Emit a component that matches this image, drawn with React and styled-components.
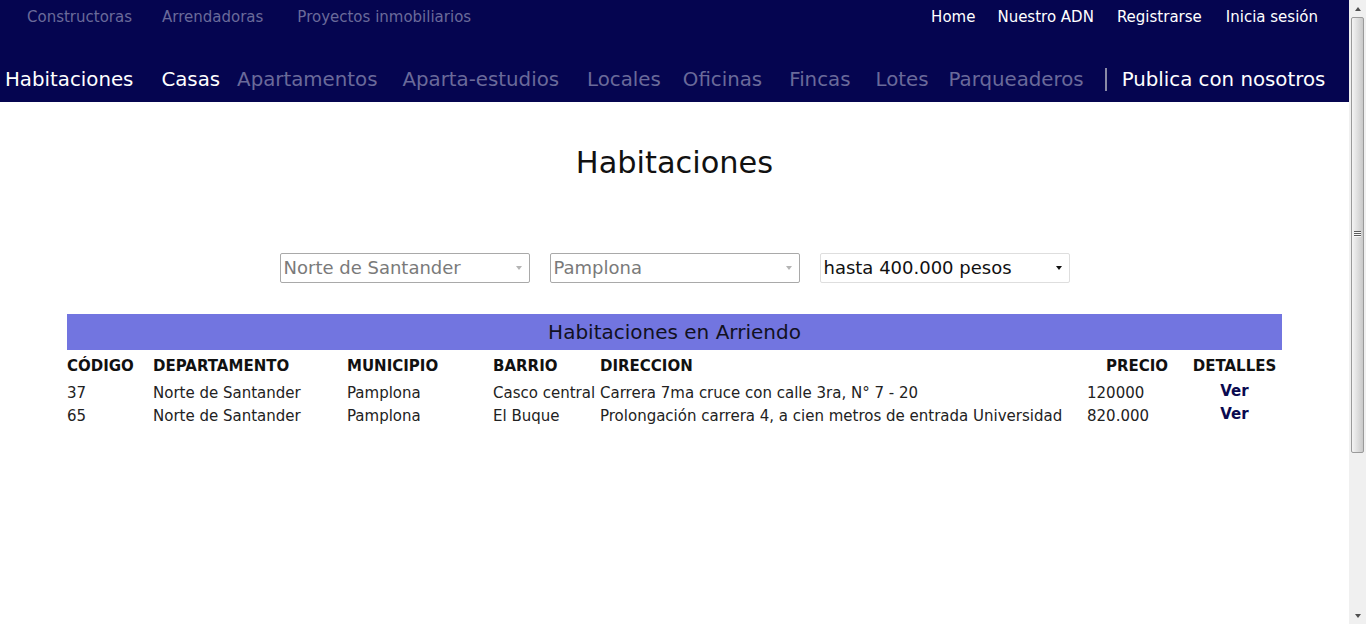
import React from "react";
import styled, { createGlobalStyle } from "styled-components";

const GlobalStyle = createGlobalStyle`
  html, body {
    margin: 0;
    padding: 0;
    background: #ffffff;
    font-family: "DejaVu Sans", "Open Sans", sans-serif;
    overflow: hidden;
  }
`;

const Shell = styled.div`
  display: flex;
  height: 624px;
`;

const Page = styled.div`
  flex: 1;
  min-width: 0;
`;

// fake browser scrollbar seen on the right edge of the screenshot
const ScrollTrack = styled.div`
  width: 17px;
  background: #f0f0f0;
  display: flex;
  flex-direction: column;
  align-items: center;
`;

const ScrollArrow = styled.div`
  height: 17px;
  width: 17px;
  display: flex;
  align-items: center;
  justify-content: center;
  &::before {
    content: "";
    border-left: 3.5px solid transparent;
    border-right: 3.5px solid transparent;
    ${(p) => (p.down ? "border-top" : "border-bottom")}: 4px solid #505050;
  }
`;

const ScrollThumb = styled.div`
  width: 13px;
  height: 436px;
  box-sizing: border-box;
  border: 1px solid #9a9a9a;
  border-radius: 2px;
  background: linear-gradient(to right, #f4f4f4, #dadada 60%, #c9c9c9);
  display: flex;
  flex-direction: column;
  align-items: center;
  justify-content: center;
  gap: 1px;
  padding-bottom: 4px;
`;

const Grip = styled.span`
  width: 7px;
  height: 1px;
  background: #5a5a5a;
  box-shadow: 0 1px 0 #f8f8f8;
`;

const ScrollRest = styled.div`
  flex: 1;
`;

const Header = styled.header`
  background: #050550;
  height: 102px;
  display: flex;
  flex-direction: column;
`;

const TopBar = styled.div`
  display: flex;
  justify-content: space-between;
  align-items: center;
  height: 34px;
  padding: 0 31px 0 27px;
`;

const LinkGroup = styled.div`
  display: flex;
`;

const TopLink = styled.a`
  font-size: 15px;
  color: ${(p) => (p.light ? "#ffffff" : "#6a6a9a")};
  text-decoration: none;
  white-space: nowrap;
  margin-right: ${(p) => p.gap || 0}px;
`;

const MainNav = styled.nav`
  display: flex;
  align-items: center;
  height: 36px;
  margin-top: 27px;
  padding-left: 5px;
`;

const NavLink = styled.a`
  font-size: 19.8px;
  color: ${(p) => (p.active ? "#ffffff" : "#6a6a9a")};
  text-decoration: none;
  margin-right: ${(p) => p.gap}px;
  white-space: nowrap;
`;

const Divider = styled.span`
  width: 2px;
  height: 23px;
  background: #8a8aa6;
  margin-right: 15px;
`;

const Title = styled.h1`
  margin: 43px 0 0;
  text-align: center;
  font-weight: 400;
  font-size: 30.4px;
  color: #111111;
`;

const Filters = styled.div`
  display: flex;
  justify-content: center;
  gap: 20px;
  margin-top: 73px;
`;

const SelectBox = styled.div`
  position: relative;
  width: 250px;
  height: 30px;
  &::after {
    content: "";
    position: absolute;
    right: 8px;
    top: 13px;
    border-left: 3.5px solid transparent;
    border-right: 3.5px solid transparent;
    border-top: 4px solid ${(p) => (p.disabled ? "#b4b4b4" : "#111111")};
    pointer-events: none;
  }
`;

const Select = styled.select`
  appearance: none;
  width: 100%;
  height: 100%;
  box-sizing: border-box;
  font-family: "DejaVu Sans", sans-serif;
  font-size: 18px;
  padding: 0 20px 2px 3px;
  border: 1px solid ${(p) => (p.disabled ? "#a9a9a9" : "#dedede")};
  border-radius: 2px;
  background: #ffffff;
  color: ${(p) => (p.disabled ? "#7a7a7a" : "#111111")};
  opacity: 1;
  outline: none;
`;

const TableWrap = styled.div`
  margin: 31px 67px 0 67px;
  width: 1215px;
`;

const Band = styled.div`
  background: #7275e0;
  height: 36px;
  display: flex;
  align-items: center;
  justify-content: center;
  font-size: 20px;
  color: #111122;
`;

const Table = styled.table`
  width: 100%;
  border-collapse: collapse;
  table-layout: fixed;
`;

const Th = styled.th`
  font-size: 15px;
  line-height: 19px;
  font-weight: 700;
  color: #111111;
  text-align: ${(p) => p.align || "left"};
  padding: 7px 0 6px;
  white-space: nowrap;
`;

const Td = styled.td`
  font-size: 15px;
  line-height: 19px;
  color: #222222;
  text-align: ${(p) => p.align || "left"};
  padding: 2px 0;
  white-space: nowrap;
`;

const ViewLink = styled.a`
  font-weight: 700;
  color: #0a0a50;
  text-decoration: none;
  position: relative;
  top: -2px;
`;

const columns = [
  { label: "CÓDIGO", width: 86 },
  { label: "DEPARTAMENTO", width: 194 },
  { label: "MUNICIPIO", width: 146 },
  { label: "BARRIO", width: 107 },
  { label: "DIRECCION", width: 487 },
  { label: "PRECIO", width: 100, align: "center" },
  { label: "DETALLES", width: 95, align: "center" },
];

const rows = [
  {
    id: "37",
    dep: "Norte de Santander",
    mun: "Pamplona",
    barrio: "Casco central",
    dir: "Carrera 7ma cruce con calle 3ra, N° 7 - 20",
    precio: "120000",
  },
  {
    id: "65",
    dep: "Norte de Santander",
    mun: "Pamplona",
    barrio: "El Buque",
    dir: "Prolongación carrera 4, a cien metros de entrada Universidad",
    precio: "820.000",
  },
];

const categories = [
  { label: "Habitaciones", active: true, gap: 28 },
  { label: "Casas", active: true, gap: 17 },
  { label: "Apartamentos", gap: 25 },
  { label: "Aparta-estudios", gap: 28 },
  { label: "Locales", gap: 22 },
  { label: "Oficinas", gap: 27 },
  { label: "Fincas", gap: 25 },
  { label: "Lotes", gap: 20 },
  { label: "Parqueaderos", gap: 21 },
];

export default function App() {
  return (
    <Shell>
      <GlobalStyle />
      <Page>
        <Header>
          <TopBar>
            <LinkGroup>
              <TopLink gap={30}>Constructoras</TopLink>
              <TopLink gap={34}>Arrendadoras</TopLink>
              <TopLink>Proyectos inmobiliarios</TopLink>
            </LinkGroup>
            <LinkGroup>
              <TopLink light gap={22}>Home</TopLink>
              <TopLink light gap={23}>Nuestro ADN</TopLink>
              <TopLink light gap={24}>Registrarse</TopLink>
              <TopLink light>Inicia sesión</TopLink>
            </LinkGroup>
          </TopBar>
          <MainNav>
            {categories.map((c) => (
              <NavLink key={c.label} active={c.active} gap={c.gap}>
                {c.label}
              </NavLink>
            ))}
            <Divider />
            <NavLink active gap={0}>
              Publica con nosotros
            </NavLink>
          </MainNav>
        </Header>

        <Title>Habitaciones</Title>

        <Filters>
          <SelectBox disabled>
            <Select disabled defaultValue="ns">
              <option value="ns">Norte de Santander</option>
            </Select>
          </SelectBox>
          <SelectBox disabled>
            <Select disabled defaultValue="pa">
              <option value="pa">Pamplona</option>
            </Select>
          </SelectBox>
          <SelectBox>
            <Select defaultValue="400">
              <option value="400">hasta 400.000 pesos</option>
              <option value="800">hasta 800.000 pesos</option>
            </Select>
          </SelectBox>
        </Filters>

        <TableWrap>
          <Band>Habitaciones en Arriendo</Band>
          <Table>
            <colgroup>
              {columns.map((c) => (
                <col key={c.label} style={{ width: c.width }} />
              ))}
            </colgroup>
            <thead>
              <tr>
                {columns.map((c) => (
                  <Th key={c.label} align={c.align}>
                    {c.label}
                  </Th>
                ))}
              </tr>
            </thead>
            <tbody>
              {rows.map((r) => (
                <tr key={r.id}>
                  <Td>{r.id}</Td>
                  <Td>{r.dep}</Td>
                  <Td>{r.mun}</Td>
                  <Td>{r.barrio}</Td>
                  <Td>{r.dir}</Td>
                  <Td>{r.precio}</Td>
                  <Td align="center">
                    <ViewLink>Ver</ViewLink>
                  </Td>
                </tr>
              ))}
            </tbody>
          </Table>
        </TableWrap>
      </Page>

      <ScrollTrack>
        <ScrollArrow />
        <ScrollThumb>
          <Grip />
          <Grip />
          <Grip />
        </ScrollThumb>
        <ScrollRest />
        <ScrollArrow down />
      </ScrollTrack>
    </Shell>
  );
}
